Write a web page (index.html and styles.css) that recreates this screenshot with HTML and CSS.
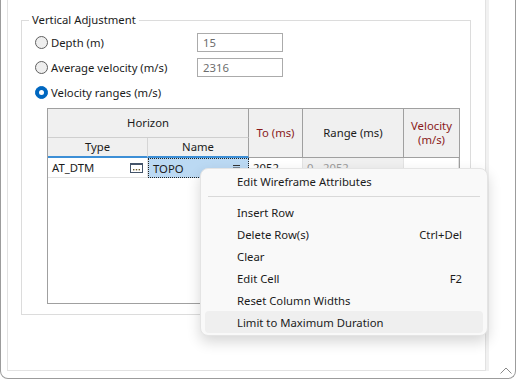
FILE: index.html
```html
<!DOCTYPE html>
<html>
<head>
<meta name="viewport" content="width=device-width, initial-scale=1">
<link rel="stylesheet" href="styles.css">
</head>
<body>

<div class="win">
<div class="panel">
<fieldset class="group">
<legend class="cap">Vertical Adjustment</legend>
<div class="body">

<div class="opt">
<label class="radio"><span class="dot"></span>Depth (m)</label>
<span class="field">15</span>
</div>
<div class="opt">
<label class="radio"><span class="dot"></span>Average velocity (m/s)</label>
<span class="field">2316</span>
</div>
<div class="opt">
<label class="radio"><span class="dot on"></span>Velocity ranges (m/s)</label>
</div>

<div class="grid">
<div class="hd hz">Horizon</div>
<div class="hd span c3 red">To (ms)</div>
<div class="hd span c4">Range (ms)</div>
<div class="hd span c5 red last">Velocity<br>(m/s)</div>
<div class="hd sub c1 ty">Type</div>
<div class="hd sub c2">Name</div>

<div class="cell row c1 split">AT_DTM
<svg width="13" height="10" viewBox="0 0 13 10"><rect x="0.5" y="0.5" width="12" height="9" fill="#fff" stroke="#44546a"/><rect x="0" y="0" width="13" height="2" fill="#44546a"/><rect x="3" y="6" width="1.4" height="1.4" fill="#6b5a2a"/><rect x="5.8" y="6" width="1.4" height="1.4" fill="#6b5a2a"/><rect x="8.6" y="6" width="1.4" height="1.4" fill="#6b5a2a"/></svg>
</div>
<div class="cell row c2 split sel">TOPO
<svg width="7" height="6" viewBox="0 0 7 6"><path d="M0 0.5H7M0 3H7M0 5.5H7" stroke="#333" stroke-width="1"/></svg>
</div>
<div class="cell row c3">2052</div>
<div class="cell row c4 ro">0 - 2052</div>
<div class="cell row c5 last"></div>
</div>

</div>
</fieldset>
</div>
<svg class="grip" width="12" height="8" viewBox="0 0 12 8"><path d="M0.5 7.5L6 2L11.5 7.5" fill="none" stroke="#8a8a8a" stroke-width="1"/></svg>
</div>

<div class="menu">
<div class="item">Edit Wireframe Attributes</div>
<div class="sep"></div>
<div class="item">Insert Row</div>
<div class="item">Delete Row(s)<span>Ctrl+Del</span></div>
<div class="item">Clear</div>
<div class="item">Edit Cell<span>F2</span></div>
<div class="item">Reset Column Widths</div>
<div class="item hot">Limit to Maximum Duration</div>
</div>

</body>
</html>
```

FILE: styles.css
```css
*{box-sizing:border-box;}
body{margin:0;font-family:"Noto Sans","Liberation Sans",sans-serif;font-size:11.3px;color:#1b1b1b;background:#fff;}
.win{position:relative;width:516px;height:379px;border:1px solid #9c9c9c;border-top:none;border-radius:0 0 8px 8px;padding-left:6px;}
.panel{width:479px;height:371px;border:1px solid #e2e2e2;border-top:none;box-shadow:3px 0 0 #f1f1f1;padding:12px 0 0 13px;}
.group{margin:0;width:450px;height:303px;border:1px solid #dcdcdc;padding:2px 0 0 0;}
.cap{margin-left:7px;padding:0 3px;font-family:"Noto Sans","Liberation Sans",sans-serif;font-size:11.3px;line-height:16px;}
.body{padding-left:13px;}
.opt{display:grid;grid-template-columns:162px 86px;align-items:center;height:25px;}
.radio{display:flex;align-items:center;gap:3px;}
.dot{width:13px;height:13px;border-radius:50%;border:1px solid #5f5f5f;background:#eeeeee;}
.dot.on{display:flex;align-items:center;justify-content:center;background:#0067c0;border-color:#0067c0;}
.dot.on::after{content:"";width:5px;height:5px;border-radius:50%;background:#fff;}
.field{height:19px;border:1px solid #ababab;padding:0 5px;line-height:17px;color:#6d6d6d;}
.grid{margin:3px 0 0 12px;width:413px;height:196px;border:1px solid #a0a0a0;display:grid;grid-template-columns:100px 101px 54px 101px 55px;grid-template-rows:29px 20px 20px;align-content:start;}
.hd{display:flex;align-items:center;justify-content:center;text-align:center;line-height:14px;background:#f0f0f0;border-right:1px solid #a0a0a0;border-bottom:1px solid #a0a0a0;}
.c1{grid-column:1;}
.c2{grid-column:2;}
.c3{grid-column:3;}
.c4{grid-column:4;}
.c5{grid-column:5;}
.hz{grid-column:1/3;grid-row:1;border-bottom-color:#cfcfcf;}
.span{grid-row:1/3;}
.sub{grid-row:2;border-bottom:2px solid #3d8fd6;}
.sub.ty{border-right-color:#d5d5d5;}
.row{grid-row:3;}
.red{color:#8a1a1a;}
.last{border-right:none;}
.cell{display:flex;align-items:center;padding:0 4px;border-right:1px solid #e3e3e3;border-bottom:1px solid #e3e3e3;}
.split{justify-content:space-between;}
.sel{background:#bbd9f3;border:1px dotted #222;padding-right:8px;}
.ro{background:#f0f0f0;color:#9a9a9a;}
.grip{position:absolute;right:3px;bottom:4px;}
.menu{position:absolute;left:200px;top:168px;width:288px;padding:1px 4px 2px;background:#f9f9f9;border:1px solid #e4e4e4;border-radius:8px;box-shadow:0 6px 14px rgba(0,0,0,0.16);}
.item{display:flex;justify-content:space-between;align-items:center;height:22px;padding:0 21px 0 32px;border-radius:4px;}
.item.hot{background:#efefef;}
.sep{height:1px;margin:4px 3px;background:#d9d9d9;}
```
